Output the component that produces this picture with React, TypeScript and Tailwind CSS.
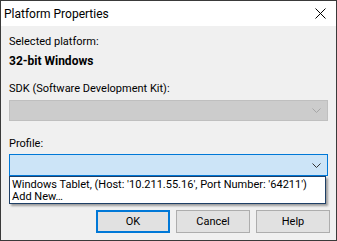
import React from "react";

const font = { fontFamily: 'Roboto, "Noto Sans", sans-serif' };

function Chevron({ color }: { color: string }) {
  return (
    <svg width="9" height="5" viewBox="0 0 9 5" className="block">
      <path d="M0.5 0.5 L4.5 4.5 L8.5 0.5" fill="none" stroke={color} strokeWidth="1" />
    </svg>
  );
}

export default function App() {
  return (
    <div
      className="w-[337px] h-[241px] border border-[#3a3a3a] bg-[#f0f0f0] flex flex-col text-black overflow-hidden"
      style={font}
    >
      <div className="h-[25px] bg-white flex items-center justify-between shrink-0">
        <span className="pl-[3px] text-[12px] leading-[16px] text-black">Platform Properties</span>
        <svg width="11" height="11" viewBox="0 0 11 11" className="mr-[10px]">
          <path d="M0.5 0.5 L10.5 10.5 M10.5 0.5 L0.5 10.5" stroke="#000" strokeWidth="1" />
        </svg>
      </div>
      <div className="flex-1 pl-[8px] pr-[7px] pt-[8px] flex flex-col text-[11px] leading-[16px]">
        <div>Selected platform:</div>
        <div className="mt-[3px] font-bold text-[12px]">32-bit Windows</div>
        <div className="mt-[12px]">SDK (Software Development Kit):</div>
        <div className="mt-[3px] h-[21px] w-[319px] bg-[#cccccc] border border-[#bfbfbf] flex items-center justify-end pr-[6px]">
          <Chevron color="#a6a6a6" />
        </div>
        <div className="mt-[15px]">Profile:</div>
        <div className="relative mt-[2px] w-[319px]">
          <div className="h-[22px] bg-[#cce4f7] border border-[#0078d7] flex items-center justify-end pr-[6px]">
            <Chevron color="#333333" />
          </div>
          <div className="absolute left-0 top-[22px] w-[317px] bg-white border border-[#1e3f66] shadow-[2px_2px_2px_rgba(0,0,0,0.35)] pt-[2px] pl-[2px] text-[11px] leading-[12px]">
            <div className="whitespace-nowrap h-[12px]">Windows Tablet, (Host: '10.211.55.16', Port Number: '64211')</div>
            <div className="whitespace-nowrap h-[12px]">Add New…</div>
          </div>
        </div>
        <div className="mt-[34px] flex justify-end gap-[6px] w-[321px]">
          <button className="w-[74px] h-[23px] bg-[#e1e1e1] border-2 border-[#0078d7] text-[11px] leading-[16px]">OK</button>
          <button className="w-[74px] h-[23px] bg-[#e1e1e1] border border-[#adadad] text-[11px] leading-[16px]">Cancel</button>
          <button className="w-[74px] h-[23px] bg-[#e1e1e1] border border-[#adadad] text-[11px] leading-[16px]">Help</button>
        </div>
      </div>
    </div>
  );
}
